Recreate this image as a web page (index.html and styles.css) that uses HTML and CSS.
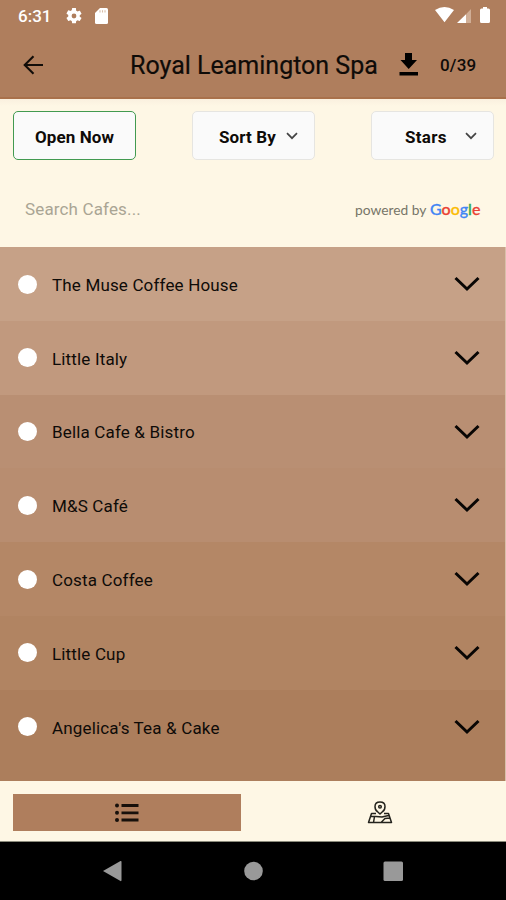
FILE: index.html
```html
<!DOCTYPE html>
<html lang="en">
<head>
<meta charset="utf-8">
<title>Royal Leamington Spa</title>
<link rel="stylesheet" href="styles.css">
</head>
<body>
<svg class="defs" width="0" height="0">
  <symbol id="chev" viewBox="0 0 26 16"><path d="M1.500 2L13 13L24.500 2" fill="none" stroke="currentColor" stroke-width="3"/></symbol>
  <symbol id="small-chev" viewBox="0 0 12 8"><path d="M1 1.200L6 6.200L11 1.200" fill="none" stroke="currentColor" stroke-width="1.700"/></symbol>
</svg>
<div class="status">
  <span class="time">6:31</span>
  <svg class="gear" width="16" height="16" viewBox="2 2 20 20"><path fill="#fff" d="M19.140 12.940c.04-.3.060-.61.060-.94s-.02-.64-.07-.94l2.030-1.580a.49.49 0 0 0 .12-.61l-1.920-3.320a.49.49 0 0 0-.59-.22l-2.390.96a7 7 0 0 0-1.620-.94l-.36-2.540A.48.48 0 0 0 13.920 2h-3.840a.48.48 0 0 0-.48.410l-.36 2.540a7 7 0 0 0-1.620.94l-2.390-.96a.48.48 0 0 0-.59.220L2.720 8.470a.48.48 0 0 0 .12.610l2.030 1.580a7 7 0 0 0 0 1.880l-2.030 1.580a.49.49 0 0 0-.12.610l1.920 3.320c.12.220.37.290.59.220l2.390-.96c.5.380 1.030.7 1.620.94l.36 2.540c.05.240.24.410.48.410h3.840c.24 0 .44-.17.480-.41l.36-2.540a7 7 0 0 0 1.620-.94l2.390.96c.22.080.47 0 .59-.22l1.920-3.320a.48.48 0 0 0-.12-.61zM12 15a3 3 0 1 1 0-6 3 3 0 0 1 0 6z"/></svg>
  <svg class="sd" width="13" height="16" viewBox="0 0 13 16"><path fill="#fff" d="M5 0H11.500Q13 0 13 1.500V14.500Q13 16 11.500 16H1.500Q0 16 0 14.500V5Z"/><path d="M5 2.200V4.500M7.500 2.200V4.500M10 2.200V4.500" stroke="#d8bda8" stroke-width="1.100"/></svg>
  <svg class="signals" width="56" height="18" viewBox="0 0 56 18"><path fill="#fff" d="M0 3Q9.500-3 19 3L9.500 15.200ZM22 16L31 7.300V16Z"/><path fill="#d0ae96" d="M31 7.300L36 2V16H31Z"/><path fill="#fff" d="M48 0H52V1.500H53.500Q55 1.500 55 3V14.500Q55 16 53.500 16H46.500Q45 16 45 14.500V3Q45 1.500 46.500 1.500H48Z"/></svg>
</div>
<header class="header">
  <svg class="back" width="21" height="20" viewBox="0 0 21 20"><path d="M20 10H2M10.500 1.200L1.700 10L10.500 18.800" fill="none" stroke="#120d09" stroke-width="2.100"/></svg>
  <h1>Royal Leamington Spa</h1>
  <svg class="download" width="20" height="23" viewBox="0 0 20 23"><path d="M6 0H13V7H18L9.700 16L1.500 7H6ZM.5 19H19V22.500H.5Z"/></svg>
  <span class="count">0/39</span>
</header>
<section class="tools">
  <div class="filters">
    <div class="btn open"><span>Open Now</span></div>
    <div class="btn sort"><span>Sort By</span><svg width="12" height="8"><use href="#small-chev"/></svg></div>
    <div class="btn stars"><span>Stars</span><svg width="12" height="8"><use href="#small-chev"/></svg></div>
  </div>
  <div class="search">
    <span class="placeholder">Search Cafes...</span>
    <span class="powered">powered by</span>
    <span class="google"><b class="blue">G</b><b class="red">o</b><b class="yellow">o</b><b class="blue">g</b><b class="green">l</b><b class="red">e</b></span>
  </div>
</section>
<main class="list">
  <div class="row r1"><i class="dot"></i><span>The Muse Coffee House</span><svg width="26" height="16"><use href="#chev"/></svg></div>
  <div class="row r2"><i class="dot"></i><span>Little Italy</span><svg width="26" height="16"><use href="#chev"/></svg></div>
  <div class="row r3"><i class="dot"></i><span>Bella Cafe &amp; Bistro</span><svg width="26" height="16"><use href="#chev"/></svg></div>
  <div class="row r4"><i class="dot"></i><span>M&amp;S Café</span><svg width="26" height="16"><use href="#chev"/></svg></div>
  <div class="row r5"><i class="dot"></i><span>Costa Coffee</span><svg width="26" height="16"><use href="#chev"/></svg></div>
  <div class="row r6"><i class="dot"></i><span>Little Cup</span><svg width="26" height="16"><use href="#chev"/></svg></div>
  <div class="row r7"><i class="dot"></i><span>Angelica's Tea &amp; Cake</span><svg width="26" height="16"><use href="#chev"/></svg></div>
</main>
<nav class="tabs">
  <div class="tab active"><svg width="24" height="20" viewBox="0 0 24 20"><path d="M6.500 2.500H23.500M6.500 9.800H23.500M6.500 17H23.500" stroke="#17100b" stroke-width="2.800"/><g fill="#17100b"><circle cx="2" cy="2.500" r="2"/><circle cx="2" cy="9.800" r="2"/><circle cx="2" cy="17" r="2"/></g></svg></div>
  <div class="tab"><svg width="26" height="23" viewBox="0 0 26 23"><g fill="none" stroke="#24231d" stroke-width="1.500" stroke-linejoin="round"><path d="M9 12.500H4.500L1.500 21.500H24.500L21.500 12.500H17M3.500 15.500H9L15 16L21.500 14.500M7.500 15.500L6.500 21.500M14.500 21L18 17.500L23 17"/><path d="M10.300 10.500C8.700 9.500 8 8 8 5.500Q8 1 13 1T18 5.500C18 8 17.300 9.500 15.700 10.500L13 13Z"/><circle cx="13" cy="5.800" r="1.300"/></g></svg></div>
</nav>
<footer class="system">
  <svg width="506" height="58" viewBox="0 0 506 58"><g fill="#999"><path d="M103 29L120.500 19Q121.500 18.500 121.500 20V38Q121.500 39.500 120.500 39Z"/><circle cx="253.500" cy="29" r="9.300"/><rect x="383.500" y="19.500" width="19.500" height="19.500" rx="1.500"/></g></svg>
</footer>
</body>
</html>
```

FILE: styles.css
```css
* { box-sizing: border-box; }
body { margin: 0; width: 506px; height: 900px; overflow: hidden; display: flex; flex-direction: column; background: #fef7e5; font-family: Roboto, sans-serif; color: #0e0b08; }
svg { display: block; flex: none; }
.defs { position: absolute; }
span, h1 { white-space: nowrap; }
.status { height: 32px; background: #af7e5d; display: flex; align-items: flex-start; padding: 7px 16px 0 18px; color: #fff; }
.time { width: 48px; font-size: 17px; line-height: 19px; font-weight: 500; }
.gear { margin-top: 1px; }
.sd { margin: 1px 0 0 13px; }
.signals { margin-left: auto; margin-right: -1px; }
.header { height: 67px; background: #af7e5d; border-bottom: 2px solid #a9714b; display: flex; align-items: center; padding-left: 23px; }
h1 { margin: 2px 0 0 86px; width: 269px; font-size: 25px; line-height: 30px; font-weight: 400; -webkit-text-stroke: .2px #0e0b08; letter-spacing: 0; }
.count { margin-left: 21px; font-size: 17px; font-weight: 500; letter-spacing: .2px; }
.tools { height: 148px; padding: 12px 12px 0 13px; background: linear-gradient(#faf0df, #fef7e5 7px); }
.filters { display: flex; justify-content: space-between; }
.btn { width: 123px; height: 49px; display: flex; align-items: center; border: 1px solid #e6e5e1; border-radius: 5px; background: #fafafa; font-size: 17px; font-weight: 700; padding-top: 2px; }
.btn.open { border-color: #429a50; justify-content: center; letter-spacing: .1px; }
.sort { padding-left: 26px; gap: 10px; letter-spacing: .1px; }
.stars { padding-left: 33px; gap: 18px; letter-spacing: .3px; }
.btn svg { color: #444; margin-top: -2px; }
.search { display: flex; align-items: center; height: 30px; margin-top: 34px; padding-left: 12px; }
.placeholder { width: 330px; font-size: 17px; letter-spacing: .15px; color: #aaa594; }
.powered { width: 75px; font: 13.800px Lato, sans-serif; color: #777568; }
.google { font: 16px Lato, sans-serif; margin-top: -2px; }
.google b { font-weight: 500; -webkit-text-stroke: .3px; }
.blue { color: #4285f4; } .red { color: #ea4335; } .yellow { color: #fbbc05; } .green { color: #34a853; }
.list { height: 534px; display: flex; flex-direction: column; border-right: 1px solid #d9c0aa; }
.row { height: 73.800px; flex: none; display: flex; align-items: flex-start; padding: 27.500px 25px 0 18px; }
.row span { flex: 1; margin: .4px 0 0 15px; font-size: 17px; line-height: 21px; letter-spacing: .16px; }
.row svg { color: #090604; margin-top: 1.500px; }
.dot { width: 19px; height: 19px; border-radius: 50%; background: #fff; }
.r1 { background: #c6a187; } .r2 { background: #c1997e; } .r3 { background: #b98f73; } .r4 { background: #b88d70; } .r5 { background: #b48766; } .r6 { background: #b18462; }
.r7 { height: auto; flex: 1; background: #ac7e5c; }
.tabs { height: 61px; display: flex; padding: 13px 12px 10px 13px; background: #fef7e5; border-bottom: 1px solid #8b8b7c; }
.tab { width: 228px; display: flex; align-items: center; justify-content: center; }
.tab + .tab { margin-left: 25px; }
.active { background: #af7e5d; }
.system { height: 58px; background: #000; }
```
